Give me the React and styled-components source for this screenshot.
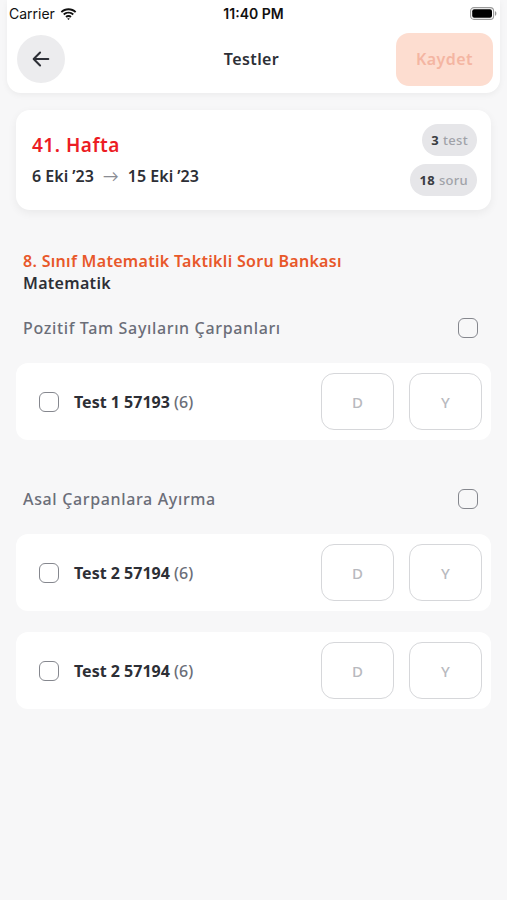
import React from 'react';
import styled, { createGlobalStyle } from 'styled-components';

const GlobalStyle = createGlobalStyle`
  html, body {
    margin: 0;
    padding: 0;
    background: #f7f7f8;
  }
  body {
    font-family: "Noto Sans", "Lato", sans-serif;
    -webkit-font-smoothing: antialiased;
  }
`;

const Page = styled.div`
  width: 507px;
  min-height: 900px;
  background: #f7f7f8;
`;

const Header = styled.header`
  margin: 0 7px;
  height: 93px;
  background: #fff;
  border-radius: 0 0 14px 14px;
  box-shadow: 0 2px 6px rgba(0, 0, 0, 0.05);
  display: flex;
  flex-direction: column;
`;

const StatusBar = styled.div`
  height: 27px;
  display: grid;
  grid-template-columns: 1fr auto 1fr;
  align-items: center;
  padding: 0 2px;
  font-family: "Inter", "Liberation Sans", sans-serif;
  font-size: 14px;
  color: #111;
`;

const Carrier = styled.div`
  display: flex;
  align-items: center;
  gap: 5px;
  font-size: 14px;
`;

const Clock = styled.div`
  font-weight: 600;
  font-size: 14px;
`;

const Battery = styled.div`
  justify-self: end;
  margin-right: 1px;
  display: flex;
  align-items: center;
`;

const NavBar = styled.div`
  flex: 1;
  display: flex;
  align-items: center;
  justify-content: space-between;
  padding: 2px 7px 4px 10px;
`;

const BackButton = styled.button`
  width: 48px;
  height: 48px;
  border-radius: 50%;
  border: none;
  background: #ececee;
  display: flex;
  align-items: center;
  justify-content: center;
  padding: 0;
`;

const NavTitle = styled.div`
  font-size: 16px;
  font-weight: 600;
  color: #2d2f36;
  margin-left: 42px;
  letter-spacing: 0.4px;
`;

const SaveButton = styled.button`
  width: 97px;
  height: 53px;
  border-radius: 13px;
  border: none;
  background: #fdddd0;
  color: #f4b5a2;
  font-family: inherit;
  font-size: 16px;
  font-weight: 600;
  letter-spacing: 0.4px;
  padding: 0;
`;

const Content = styled.main`
  padding: 17px 16px 0 16px;
  display: flex;
  flex-direction: column;
`;

const WeekCard = styled.section`
  background: #fff;
  border-radius: 14px;
  box-shadow: 0 3px 10px rgba(0, 0, 0, 0.06);
  height: 100px;
  box-sizing: border-box;
  padding: 0 14px 0 16px;
  display: flex;
  align-items: center;
  justify-content: space-between;
`;

const WeekInfo = styled.div`
  display: flex;
  flex-direction: column;
  gap: 7px;
  margin-top: -2px;
`;

const WeekTitle = styled.div`
  color: #ec1c24;
  font-size: 19px;
  font-weight: 600;
  letter-spacing: 0.5px;
`;

const DateRange = styled.div`
  color: #2d2f36;
  font-size: 16px;
  font-weight: 600;
  display: flex;
  align-items: center;
  gap: 9px;
`;

const Arrow = styled.span`
  color: #8a8c93;
  font-weight: 400;
  font-size: 16px;
`;

const Badges = styled.div`
  display: flex;
  flex-direction: column;
  align-items: flex-end;
  gap: 8px;
`;

const Badge = styled.div`
  height: 32px;
  padding: 0 9px;
  border-radius: 16px;
  background: #e6e6e9;
  display: flex;
  align-items: center;
  gap: 4px;
  font-size: 13px;
  font-weight: 500;
  color: #a0a2a8;
  letter-spacing: 0.3px;
  b {
    color: #3a3c42;
    font-weight: 700;
  }
`;

const Book = styled.div`
  margin-top: 40px;
  padding: 0 7px;
  display: flex;
  flex-direction: column;
`;

const BookTitle = styled.div`
  color: #e8582a;
  font-size: 16px;
  font-weight: 600;
  letter-spacing: 0.3px;
`;

const Subject = styled.div`
  color: #2d2f36;
  font-size: 16px;
  font-weight: 600;
  letter-spacing: 0.3px;
`;

const TopicRow = styled.div`
  margin-top: ${p => p.$top}px;
  padding: 0 13px 0 7px;
  height: 24px;
  display: flex;
  align-items: center;
  justify-content: space-between;
  color: #6b6e78;
  font-size: 16px;
  font-weight: 500;
  letter-spacing: 0.65px;
`;

const Box = styled.span`
  width: 20px;
  height: 20px;
  border: 1.5px solid #85878e;
  border-radius: 6px;
  box-sizing: border-box;
  display: inline-block;
  flex-shrink: 0;
`;

const TestCard = styled.div`
  margin-top: ${p => p.$top}px;
  height: 77px;
  background: #fff;
  border-radius: 12px;
  display: flex;
  align-items: center;
  padding: 0 9px 0 23px;
  gap: 15px;
`;

const TestName = styled.div`
  flex: 1;
  color: #2d2f36;
  font-size: 16px;
  font-weight: 700;
  span {
    color: #6b6e78;
    font-weight: 500;
  }
`;

const AnswerGroup = styled.div`
  display: flex;
  gap: 15px;
`;

const AnswerBox = styled.div`
  width: 73px;
  height: 57px;
  box-sizing: border-box;
  border: 1.5px solid #d6d7da;
  border-radius: 13px;
  display: flex;
  align-items: center;
  justify-content: center;
  color: #b8b9be;
  font-size: 15px;
  font-weight: 500;
`;

const WifiIcon = () => (
  <svg width="17" height="12" viewBox="0 0 17 12">
    <path d="M8.5 2.2c2.5 0 4.8 1 6.5 2.6l1.3-1.4C14.2 1.4 11.5.2 8.5.2S2.8 1.4.7 3.4L2 4.8c1.7-1.6 4-2.6 6.5-2.6z" fill="#111" />
    <path d="M8.5 5.6c1.6 0 3 .6 4.1 1.6l1.3-1.4C12.5 4.5 10.6 3.7 8.5 3.7S4.5 4.5 3.1 5.8l1.3 1.4c1.1-1 2.5-1.6 4.1-1.6z" fill="#111" />
    <path d="M8.5 9c.7 0 1.3.3 1.8.7l1.3-1.4c-.8-.8-1.9-1.2-3.1-1.2s-2.3.4-3.1 1.2l1.3 1.4c.5-.4 1.1-.7 1.8-.7zM8.5 12l1.2-1.3c-.3-.3-.7-.4-1.2-.4s-.9.1-1.2.4z" fill="#111" />
  </svg>
);

const BatteryIcon = () => (
  <svg width="27" height="13" viewBox="0 0 27 13">
    <rect x="0.6" y="0.6" width="23" height="11.8" rx="3.4" fill="none" stroke="#9a9a9a" strokeWidth="1.1" />
    <rect x="2.2" y="2.2" width="19.8" height="8.6" rx="2" fill="#000" />
    <path d="M25 4.3c.9.3 1.4 1.1 1.4 2.2s-.5 1.9-1.4 2.2z" fill="#9a9a9a" />
  </svg>
);

const BackArrow = () => (
  <svg width="22" height="22" viewBox="0 0 24 24" fill="none" stroke="#2d2f36" strokeWidth="2.2" strokeLinecap="round" strokeLinejoin="round">
    <path d="M20 12H4.5" />
    <path d="M11 5l-7 7 7 7" />
  </svg>
);

const topics = [
  {
    title: 'Pozitif Tam Sayıların Çarpanları',
    top: 22,
    tests: [{ name: 'Test 1 57193', count: 6 }],
  },
  {
    title: 'Asal Çarpanlara Ayırma',
    top: 47,
    tests: [
      { name: 'Test 2 57194', count: 6 },
      { name: 'Test 2 57194', count: 6 },
    ],
  },
];

export default function App() {
  return (
    <Page>
      <GlobalStyle />
      <Header>
        <StatusBar>
          <Carrier>
            Carrier <WifiIcon />
          </Carrier>
          <Clock>11:40 PM</Clock>
          <Battery>
            <BatteryIcon />
          </Battery>
        </StatusBar>
        <NavBar>
          <BackButton>
            <BackArrow />
          </BackButton>
          <NavTitle>Testler</NavTitle>
          <SaveButton>Kaydet</SaveButton>
        </NavBar>
      </Header>

      <Content>
        <WeekCard>
          <WeekInfo>
            <WeekTitle>41. Hafta</WeekTitle>
            <DateRange>
              6 Eki ’23 <Arrow>→</Arrow> 15 Eki ’23
            </DateRange>
          </WeekInfo>
          <Badges>
            <Badge>
              <b>3</b> test
            </Badge>
            <Badge>
              <b>18</b> soru
            </Badge>
          </Badges>
        </WeekCard>

        <Book>
          <BookTitle>8. Sınıf Matematik Taktikli Soru Bankası</BookTitle>
          <Subject>Matematik</Subject>
        </Book>

        {topics.map((topic, i) => (
          <React.Fragment key={i}>
            <TopicRow $top={topic.top}>
              {topic.title}
              <Box />
            </TopicRow>
            {topic.tests.map((test, j) => (
              <TestCard key={j} $top={j === 0 ? 23 : 21}>
                <Box />
                <TestName>
                  {test.name} <span>({test.count})</span>
                </TestName>
                <AnswerGroup>
                  <AnswerBox>D</AnswerBox>
                  <AnswerBox>Y</AnswerBox>
                </AnswerGroup>
              </TestCard>
            ))}
          </React.Fragment>
        ))}
      </Content>
    </Page>
  );
}
